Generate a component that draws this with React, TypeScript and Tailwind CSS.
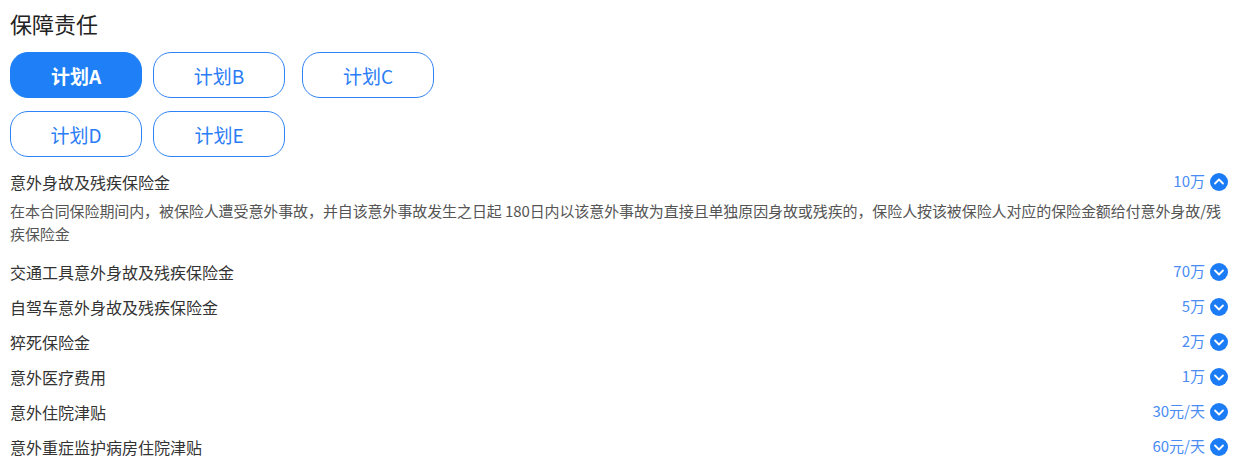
import React from "react";

interface CoverageItem {
  name: string;
  amount: string;
  detail?: string;
}

const plans = ["计划A", "计划B", "计划C", "计划D", "计划E"];

const items: CoverageItem[] = [
  {
    name: "意外身故及残疾保险金",
    amount: "10万",
    detail:
      "在本合同保险期间内，被保险人遭受意外事故，并自该意外事故发生之日起 180日内以该意外事故为直接且单独原因身故或残疾的，保险人按该被保险人对应的保险金额给付意外身故/残疾保险金",
  },
  { name: "交通工具意外身故及残疾保险金", amount: "70万" },
  { name: "自驾车意外身故及残疾保险金", amount: "5万" },
  { name: "猝死保险金", amount: "2万" },
  { name: "意外医疗费用", amount: "1万" },
  { name: "意外住院津贴", amount: "30元/天" },
  { name: "意外重症监护病房住院津贴", amount: "60元/天" },
];

const ToggleIcon: React.FC<{ open?: boolean }> = ({ open }) => (
  <svg width="18" height="18" viewBox="0 0 18 18" className="shrink-0">
    <circle cx="9" cy="9" r="9" fill="#1b7cf6" />
    <polyline
      points={open ? "5,10.5 9,6.5 13,10.5" : "5,7.5 9,11.5 13,7.5"}
      fill="none"
      stroke="#fff"
      strokeWidth="1.8"
      strokeLinecap="round"
      strokeLinejoin="round"
    />
  </svg>
);

const PlanButton: React.FC<{ label: string; active?: boolean; className?: string }> = ({
  label,
  active,
  className,
}) => (
  <button
    className={
      "w-[132px] h-[46px] rounded-[18px] text-[19px] leading-none " +
      (active
        ? "bg-[#1e7ff6] text-white font-bold border border-[#1e7ff6] "
        : "bg-white text-[#2a7cf6] border border-[#2e83f6] ") +
      (className ?? "")
    }
  >
    {label}
  </button>
);

export default function App() {
  return (
    <div
      className="w-[1239px] h-[476px] bg-white overflow-hidden pl-[10px] pr-[11px] pt-[7px]"
      style={{ fontFamily: '"Noto Sans CJK SC", "Noto Sans", sans-serif' }}
    >
      <h2 className="text-[22px] leading-[32px] text-[#222]">保障责任</h2>

      <div className="mt-[13px] flex">
        <PlanButton label={plans[0]} active />
        <PlanButton label={plans[1]} className="ml-[11px]" />
        <PlanButton label={plans[2]} className="ml-[17px]" />
      </div>
      <div className="mt-[13px] flex">
        <PlanButton label={plans[3]} />
        <PlanButton label={plans[4]} className="ml-[11px]" />
      </div>

      <div className="mt-[7px]">
        {items.map((item, i) => (
          <div key={item.name}>
            <div className="h-[35px] flex items-center justify-between">
              <span className="text-[16px] text-[#333]">{item.name}</span>
              <span className="flex items-center gap-[5px]">
                <span className="text-[15px] text-[#4a8cf4]">{item.amount}</span>
                <ToggleIcon open={i === 0} />
              </span>
            </div>
            {item.detail ? (
              <p className="text-[15px] leading-[23px] tracking-[-0.1px] text-[#555] pb-[9px]">
                {item.detail}
              </p>
            ) : null}
          </div>
        ))}
      </div>
    </div>
  );
}
